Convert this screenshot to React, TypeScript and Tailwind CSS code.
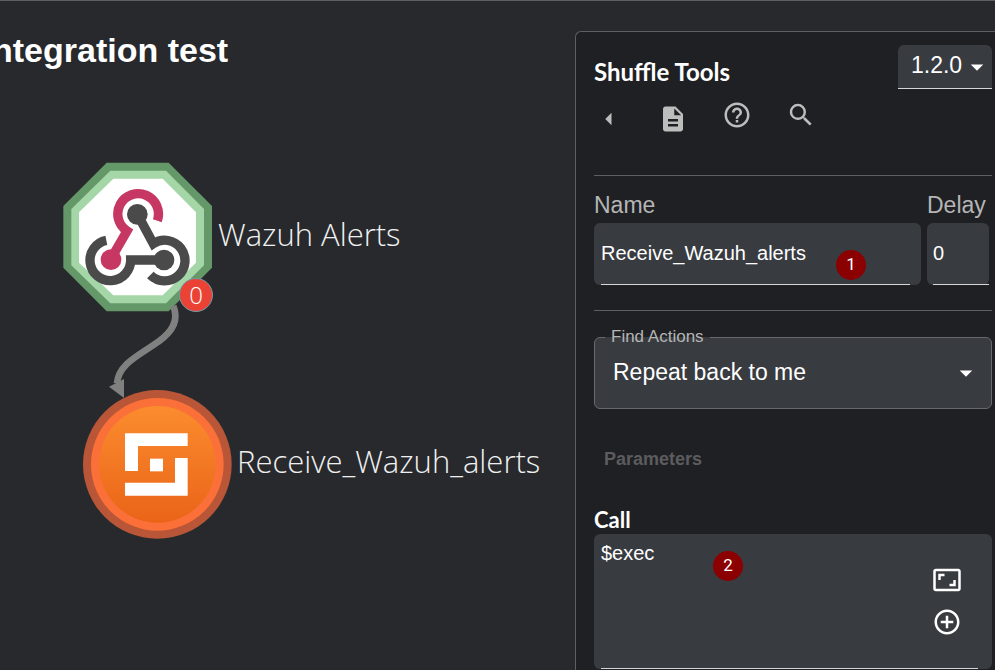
import { useState } from 'react';
import type { ReactNode } from 'react';
import {
  MdAddCircleOutline,
  MdArrowDropDown,
  MdArrowLeft,
  MdAspectRatio,
  MdDescription,
  MdHelpOutline,
  MdSearch
} from 'react-icons/md';

const WebhookIcon = () => (
  <svg className="w-[150px] h-[150px] shrink-0" viewBox="39 36 450 450" fill="none">
    <path d="M170 38H356L486 168V353L356 484H170L40 353V168Z" fill="#659868" />
    <path d="M181 62H348L462 177V346L348 460H181L64 346V177Z" fill="#a5d6a7" />
    <path d="M190 86H338L438 187V338L338 436H190L87 338V187Z" fill="#fff" />
    <path d="M322 212A61 61 0 1 0 231 243L190 314" stroke="#c73763" strokeWidth="28" />
    <circle cx="183" cy="329" r="31" fill="#c73763" />
    <path d="M270 207L310 281A61 61 0 1 1 301 375" stroke="#4a4a4a" strokeWidth="28" />
    <path d="M342 330H242A61 61 0 1 1 169 271" stroke="#4a4a4a" strokeWidth="28" />
    <circle cx="262" cy="193" r="31" fill="#4a4a4a" />
    <circle cx="342" cy="330" r="31" fill="#4a4a4a" />
  </svg>
);

const ShuffleIcon = () => (
  <svg className="w-[150px] h-[150px] shrink-0" viewBox="36 267 450 450">
    <defs>
      <linearGradient id="shuffle-fill" x1="0" y1="0" x2="0" y2="1">
        <stop offset="0" stopColor="#fb8c2e" />
        <stop offset="1" stopColor="#ea6418" />
      </linearGradient>
    </defs>
    <circle cx="262" cy="493" r="223" fill="#b85637" />
    <circle cx="262" cy="493" r="199" fill="#fb7038" />
    <circle cx="262" cy="493" r="175" fill="url(#shuffle-fill)" />
    <path d="M165 400H353V438H204V513H165Z" fill="#fff" />
    <path d="M353 474V587H165V548H315V474Z" fill="#fff" />
    <path d="M240 476H279V514H240Z" fill="#fff" />
  </svg>
);

const StepBadge = ({ step, className }: { step: number; className: string }) => (
  <span
    className={`absolute w-[30px] h-[30px] rounded-full bg-[#8b0000] text-white font-[Roboto,sans-serif] text-[17px] flex items-center justify-center ${className}`}
  >
    {step}
  </span>
);

const IconButton = ({ label, className, children }: { label: string; className?: string; children: ReactNode }) => (
  <button type="button" aria-label={label} className={`w-[30px] h-[30px] flex items-center justify-center ${className ?? ''}`}>
    {children}
  </button>
);

const WorkflowCanvas = () => (
  <main className="relative flex-1 min-w-0 overflow-hidden">
    <h1 className="-ml-2 mt-[29px] text-[34px] leading-10 font-bold text-white whitespace-nowrap">
      ntegration test
    </h1>

    <div className="absolute left-[63px] top-[161px] flex items-center gap-[5px]">
      <WebhookIcon />
      <span className="pb-[6px] font-['Open_Sans',sans-serif] font-light text-[31px] text-[#f0f0f0] whitespace-nowrap">
        Wazuh Alerts
      </span>
    </div>

    {/* edge between the two nodes */}
    <svg className="absolute left-[100px] top-[299px] w-[90px] h-[100px]" viewBox="90 0 270 300" fill="none">
      <path d="M310 18C328 62 305 97 265 125C215 162 145 190 141 250" stroke="#808080" strokeWidth="20" />
      <path d="M117 260L162 237V294Z" fill="#808080" />
    </svg>

    <span className="absolute left-[179px] top-[277px] w-[34px] h-[34px] rounded-full border border-[#6f9aa8] bg-[#ea4335] text-white font-['Open_Sans',sans-serif] font-light text-2xl flex items-center justify-center">
      0
    </span>

    <div className="absolute left-[82px] top-[388px] flex items-center gap-[5px]">
      <ShuffleIcon />
      <span className="pb-[6px] font-['Open_Sans',sans-serif] font-light text-[31px] text-[#f0f0f0] whitespace-nowrap">
        Receive_Wazuh_alerts
      </span>
    </div>
  </main>
);

const ActionPanel = () => {
  const [name, setName] = useState('Receive_Wazuh_alerts');
  const [delay, setDelay] = useState('0');
  const [call, setCall] = useState('$exec');

  return (
    <aside className="w-[420px] shrink-0 mt-[30px] pl-[18px] pr-[3px] pt-[13px] bg-[#1f2023] border-l border-t border-[#5d5f62] rounded-tl-md">
      <header className="flex items-end justify-between">
        <h2 className="pb-px font-[Lato,sans-serif] font-bold text-2xl text-white">Shuffle Tools</h2>
        <div className="relative w-[94px]">
          <select
            aria-label="Version"
            className="appearance-none w-full h-[44px] pl-[13px] pb-[2px] bg-[#383b40] border-b border-[#d5d6d7] rounded-t-md text-[23px] text-white"
          >
            <option>1.2.0</option>
          </select>
          <MdArrowDropDown className="absolute right-0 top-[7px] w-[30px] h-[30px] text-white pointer-events-none" />
        </div>
      </header>

      <div className="flex h-[34px] mt-[11px] gap-[34px] text-[#bdbdbd]">
        <IconButton label="Collapse" className="self-end">
          <MdArrowLeft size={30} />
        </IconButton>
        <IconButton label="Documentation" className="self-end">
          <MdDescription size={30} />
        </IconButton>
        <IconButton label="Help">
          <MdHelpOutline size={30} />
        </IconButton>
        <IconButton label="Search">
          <MdSearch size={30} />
        </IconButton>
      </div>

      <hr className="mt-[41px] border-[#5d5f62]" />

      <div className="flex gap-[6px] pr-[3px] mt-[13px]">
        <div className="relative flex-1 min-w-0">
          <label htmlFor="action-name" className="block text-[23px] leading-8 text-[#b5b5b6]">
            Name
          </label>
          <div className="mt-[2px] pl-[7px] pr-[11px] bg-[#383b40] rounded-md">
            <input
              id="action-name"
              value={name}
              onChange={(e) => setName(e.target.value)}
              className="block w-full h-[62px] border-b border-[#d5d6d7] bg-transparent text-xl text-white outline-none"
            />
          </div>
          <StepBadge step={1} className="right-[55px] bottom-[5px]" />
        </div>
        <div className="w-[62px]">
          <label htmlFor="action-delay" className="block text-[23px] leading-8 text-[#b5b5b6]">
            Delay
          </label>
          <div className="mt-[2px] pl-[6px] bg-[#383b40] rounded-md">
            <input
              id="action-delay"
              value={delay}
              onChange={(e) => setDelay(e.target.value)}
              className="block w-full h-[62px] border-b border-[#d5d6d7] bg-transparent text-xl text-white outline-none"
            />
          </div>
        </div>
      </div>

      <hr className="mt-[25px] border-[#5d5f62]" />

      <div className="relative mt-[26px]">
        <label
          htmlFor="find-actions"
          className="absolute left-[11px] -top-[10px] px-[6px] bg-linear-to-b from-[#1f2023] from-50% to-[#383b40] to-50% text-[17px] leading-5 text-[#b5b5b6]"
        >
          Find Actions
        </label>
        <select
          id="find-actions"
          className="block appearance-none w-full h-[72px] pl-[18px] pr-10 pb-[2px] bg-[#383b40] border border-[#68696c] rounded-md text-[23px] text-white"
        >
          <option>Repeat back to me</option>
        </select>
        <MdArrowDropDown className="absolute right-[11px] top-[21px] w-[30px] h-[30px] text-white pointer-events-none" />
      </div>

      <h3 className="mt-[38px] ml-[10px] text-lg leading-6 font-bold text-[#5c5c5e]">Parameters</h3>

      <label htmlFor="param-call" className="block mt-[35px] font-[Lato,sans-serif] font-bold text-[22px] leading-7 text-white">
        Call
      </label>
      <div className="relative pl-[7px] pr-[14px] bg-[#383b40] rounded-md">
        <textarea
          id="param-call"
          value={call}
          onChange={(e) => setCall(e.target.value)}
          className="block w-full h-[135px] pt-[5px] resize-none border-b border-[#d5d6d7] bg-transparent text-xl text-white outline-none"
        />
        <StepBadge step={2} className="left-[119px] top-[17px]" />
        <div className="absolute right-[30px] top-[31px] flex flex-col gap-3 text-white">
          <IconButton label="Expand editor">
            <MdAspectRatio size={30} />
          </IconButton>
          <IconButton label="Add variable">
            <MdAddCircleOutline size={30} />
          </IconButton>
        </div>
      </div>
    </aside>
  );
};

export default function App() {
  return (
    <div className="flex min-h-screen overflow-hidden border-t border-[#5b6163] bg-[#27292d] font-['Liberation_Sans',Arial,sans-serif]">
      <WorkflowCanvas />
      <ActionPanel />
    </div>
  );
}
